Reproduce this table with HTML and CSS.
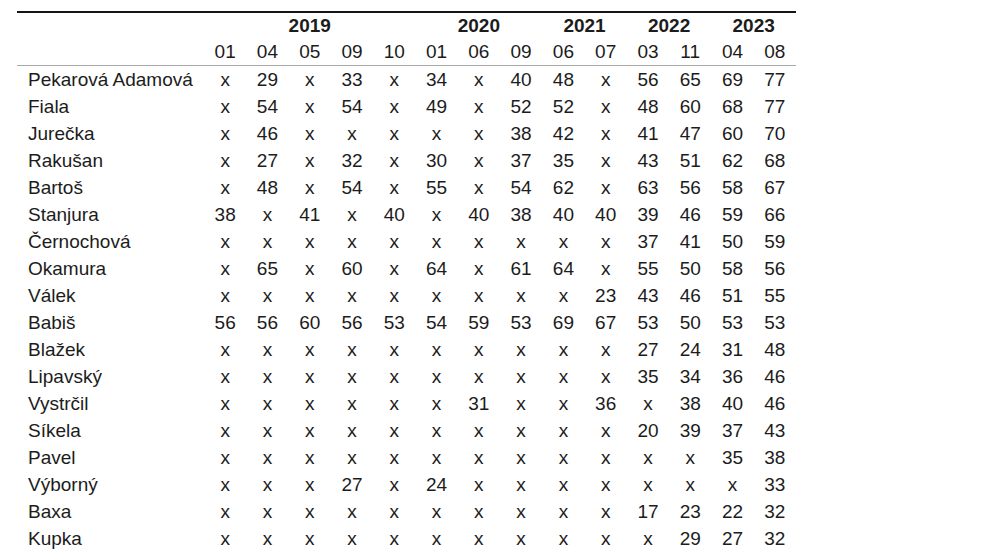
FILE: index.html
```html
<!DOCTYPE html>
<html lang="cs">
<head>
<meta charset="utf-8">
<title>Tabulka</title>
<link rel="stylesheet" href="styles.css">
</head>
<body>
<div class="page">
<table class="poll">
<colgroup><col class="c-name"><col span="14"></colgroup>
<thead>
<tr class="years"><th></th><th colspan="5">2019</th><th colspan="3">2020</th><th colspan="2">2021</th><th colspan="2">2022</th><th colspan="2">2023</th></tr>
<tr class="months"><th></th><th>01</th><th>04</th><th>05</th><th>09</th><th>10</th><th>01</th><th>06</th><th>09</th><th>06</th><th>07</th><th>03</th><th>11</th><th>04</th><th>08</th></tr>
</thead>
<tbody>
<tr><td>Pekarová Adamová</td><td>x</td><td>29</td><td>x</td><td>33</td><td>x</td><td>34</td><td>x</td><td>40</td><td>48</td><td>x</td><td>56</td><td>65</td><td>69</td><td>77</td></tr>
<tr><td>Fiala</td><td>x</td><td>54</td><td>x</td><td>54</td><td>x</td><td>49</td><td>x</td><td>52</td><td>52</td><td>x</td><td>48</td><td>60</td><td>68</td><td>77</td></tr>
<tr><td>Jurečka</td><td>x</td><td>46</td><td>x</td><td>x</td><td>x</td><td>x</td><td>x</td><td>38</td><td>42</td><td>x</td><td>41</td><td>47</td><td>60</td><td>70</td></tr>
<tr><td>Rakušan</td><td>x</td><td>27</td><td>x</td><td>32</td><td>x</td><td>30</td><td>x</td><td>37</td><td>35</td><td>x</td><td>43</td><td>51</td><td>62</td><td>68</td></tr>
<tr><td>Bartoš</td><td>x</td><td>48</td><td>x</td><td>54</td><td>x</td><td>55</td><td>x</td><td>54</td><td>62</td><td>x</td><td>63</td><td>56</td><td>58</td><td>67</td></tr>
<tr><td>Stanjura</td><td>38</td><td>x</td><td>41</td><td>x</td><td>40</td><td>x</td><td>40</td><td>38</td><td>40</td><td>40</td><td>39</td><td>46</td><td>59</td><td>66</td></tr>
<tr><td>Černochová</td><td>x</td><td>x</td><td>x</td><td>x</td><td>x</td><td>x</td><td>x</td><td>x</td><td>x</td><td>x</td><td>37</td><td>41</td><td>50</td><td>59</td></tr>
<tr><td>Okamura</td><td>x</td><td>65</td><td>x</td><td>60</td><td>x</td><td>64</td><td>x</td><td>61</td><td>64</td><td>x</td><td>55</td><td>50</td><td>58</td><td>56</td></tr>
<tr><td>Válek</td><td>x</td><td>x</td><td>x</td><td>x</td><td>x</td><td>x</td><td>x</td><td>x</td><td>x</td><td>23</td><td>43</td><td>46</td><td>51</td><td>55</td></tr>
<tr><td>Babiš</td><td>56</td><td>56</td><td>60</td><td>56</td><td>53</td><td>54</td><td>59</td><td>53</td><td>69</td><td>67</td><td>53</td><td>50</td><td>53</td><td>53</td></tr>
<tr><td>Blažek</td><td>x</td><td>x</td><td>x</td><td>x</td><td>x</td><td>x</td><td>x</td><td>x</td><td>x</td><td>x</td><td>27</td><td>24</td><td>31</td><td>48</td></tr>
<tr><td>Lipavský</td><td>x</td><td>x</td><td>x</td><td>x</td><td>x</td><td>x</td><td>x</td><td>x</td><td>x</td><td>x</td><td>35</td><td>34</td><td>36</td><td>46</td></tr>
<tr><td>Vystrčil</td><td>x</td><td>x</td><td>x</td><td>x</td><td>x</td><td>x</td><td>31</td><td>x</td><td>x</td><td>36</td><td>x</td><td>38</td><td>40</td><td>46</td></tr>
<tr><td>Síkela</td><td>x</td><td>x</td><td>x</td><td>x</td><td>x</td><td>x</td><td>x</td><td>x</td><td>x</td><td>x</td><td>20</td><td>39</td><td>37</td><td>43</td></tr>
<tr><td>Pavel</td><td>x</td><td>x</td><td>x</td><td>x</td><td>x</td><td>x</td><td>x</td><td>x</td><td>x</td><td>x</td><td>x</td><td>x</td><td>35</td><td>38</td></tr>
<tr><td>Výborný</td><td>x</td><td>x</td><td>x</td><td>27</td><td>x</td><td>24</td><td>x</td><td>x</td><td>x</td><td>x</td><td>x</td><td>x</td><td>x</td><td>33</td></tr>
<tr><td>Baxa</td><td>x</td><td>x</td><td>x</td><td>x</td><td>x</td><td>x</td><td>x</td><td>x</td><td>x</td><td>x</td><td>17</td><td>23</td><td>22</td><td>32</td></tr>
<tr><td>Kupka</td><td>x</td><td>x</td><td>x</td><td>x</td><td>x</td><td>x</td><td>x</td><td>x</td><td>x</td><td>x</td><td>x</td><td>29</td><td>27</td><td>32</td></tr>
<tr><td>Hladký</td><td>x</td><td>x</td><td>x</td><td>x</td><td>x</td><td>x</td><td>x</td><td>x</td><td>x</td><td>x</td><td>x</td><td>x</td><td>27</td><td>31</td></tr>
</tbody>
</table>
</div>
</body>
</html>
```
FILE: styles.css
```css
html, body {
  margin: 0;
  padding: 0;
  background: #fff;
}
.page {
  padding: 11px 0 0 17px;
}
.poll {
  width: 779px;
  table-layout: fixed;
  border-collapse: collapse;
  border-top: 2px solid #151515;
  font-family: "Liberation Sans", Arial, sans-serif;
  font-size: 19px;
  color: #1c1c1c;
}
.c-name {
  width: 187px;
}
.poll th,
.poll td {
  padding: 0;
  text-align: center;
  white-space: nowrap;
}
.years th {
  height: 26px;
  line-height: 26px;
  font-weight: bold;
}
.months th {
  height: 26px;
  line-height: 26px;
  font-weight: normal;
  border-bottom: 1px solid #a8a8a8;
}
.poll tbody td {
  height: 27px;
  line-height: 27px;
}
.poll tbody td:first-child {
  text-align: left;
  padding-left: 11px;
}
```
